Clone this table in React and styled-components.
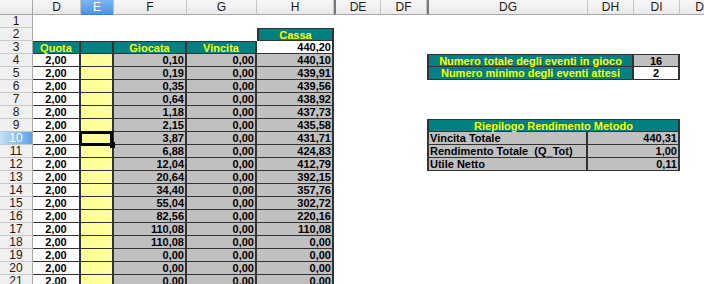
import React from 'react';
import styled, { createGlobalStyle, css } from 'styled-components';

const GlobalStyle = createGlobalStyle`
  html, body {
    margin: 0;
    padding: 0;
    background: #fff;
    overflow: hidden;
  }
  body {
    font-family: "Liberation Sans", Arial, sans-serif;
  }
`;

const TEAL = '#008080';
const LINE = '#333';

const COLUMNS = [
  { name: 'D', width: 48 },
  { name: 'E', width: 33, active: true },
  { name: 'F', width: 73 },
  { name: 'G', width: 70 },
  { name: 'H', width: 77 },
  { name: 'DE', width: 47, gap: true },
  { name: 'DF', width: 46 },
  { name: 'DG', width: 161, gap: true },
  { name: 'DH', width: 46 },
  { name: 'DI', width: 46 },
  { name: 'DJ', width: 46 },
];

const GIOCATA = ['0,10', '0,19', '0,35', '0,64', '1,18', '2,15', '3,87', '6,88', '12,04', '20,64', '34,40', '55,04', '82,56', '110,08', '110,08', '0,00', '0,00', '0,00'];
const CASSA = ['440,10', '439,91', '439,56', '438,92', '437,73', '435,58', '431,71', '424,83', '412,79', '392,15', '357,76', '302,72', '220,16', '110,08', '0,00', '0,00', '0,00', '0,00'];

const SUMMARY = {
  10: ['Vincita Totale', '440,31'],
  11: ['Rendimento Totale  (Q_Tot)', '1,00'],
  12: ['Utile Netto', '0,11'],
};

const Sheet = styled.div`
  display: grid;
  grid-template-columns: 33px ${COLUMNS.map((c) => `${c.width}px`).join(' ')};
  grid-template-rows: 15px repeat(21, 13px);
  width: max-content;
`;

const Corner = styled.div`
  box-sizing: border-box;
  background: linear-gradient(#f7f7f7, #e9e9e9);
  border-right: 1px solid #a8a8a8;
  border-bottom: 1px solid #a8a8a8;
`;

const ColHead = styled.div`
  box-sizing: border-box;
  display: flex;
  align-items: center;
  justify-content: center;
  font-size: 12px;
  color: #1a1a1a;
  background: linear-gradient(#f7f7f7, #e9e9e9);
  border-right: 1px solid #c4c4c4;
  border-bottom: 1px solid #a8a8a8;
  overflow: hidden;
  ${(p) => p.$gap && css`border-left: 2px solid #7a7a7a;`}
  ${(p) => p.$active && css`
    color: #fff;
    background: linear-gradient(#7ab6f2, #4b95e6);
    border-bottom-color: #3a7fd0;
  `}
`;

const RowHead = styled.div`
  box-sizing: border-box;
  display: flex;
  align-items: center;
  justify-content: center;
  font-size: 12px;
  line-height: 12px;
  color: #2a1414;
  background: #f0f0f0;
  border-right: 1px solid #a8a8a8;
  border-bottom: 1px solid #c8c8c8;
  overflow: hidden;
  ${(p) => p.$active && css`
    color: #fff;
    background: linear-gradient(to right, #c4e0fb, #5ba3ee);
  `}
`;

const FILLS = {
  blank: '#fff',
  head: TEAL,
  white: '#fff',
  yellow: '#ffff99',
  grey: '#c0c0c0',
};

const Cell = styled.div`
  position: relative;
  box-sizing: border-box;
  display: flex;
  align-items: center;
  justify-content: ${(p) => ({ left: 'flex-start', center: 'center', right: 'flex-end' }[p.$align || 'center'])};
  padding: 0 1px;
  font-size: 11px;
  line-height: 12px;
  font-weight: bold;
  white-space: pre;
  color: ${(p) => (p.$kind === 'head' ? '#ffff00' : '#000')};
  background: ${(p) => FILLS[p.$kind || 'blank']};
  grid-column: span ${(p) => p.$span || 1};
  ${(p) => p.$kind && p.$kind !== 'blank' && css`
    border-right: 2px solid ${LINE};
    border-bottom: 1px solid ${LINE};
  `}
  ${(p) => p.$top && css`border-top: 1px solid ${LINE};`}
  ${(p) => p.$left && css`border-left: 2px solid ${LINE};`}
`;

const Selection = styled.div`
  position: absolute;
  top: -1px;
  left: -2px;
  right: -1px;
  bottom: -2px;
  border: 3px solid #000;
  z-index: 2;
  pointer-events: none;

  &::after {
    content: '';
    position: absolute;
    right: -5px;
    bottom: -5px;
    width: 5px;
    height: 6px;
    background: #000;
  }
`;

const blanks = (n) => Array.from({ length: n }, () => ({}));

// left-hand betting table, columns D..H
function tableCells(row) {
  if (row === 1) return blanks(5);
  if (row === 2) return [...blanks(4), { kind: 'head', text: 'Cassa', top: true, left: true }];
  if (row === 3) {
    return [
      { kind: 'head', text: 'Quota', top: true },
      { kind: 'head', top: true },
      { kind: 'head', text: 'Giocata', top: true },
      { kind: 'head', text: 'Vincita', top: true },
      { kind: 'white', text: '440,20', align: 'right' },
    ];
  }
  const i = row - 4;
  return [
    { kind: 'white', text: '2,00' },
    { kind: 'yellow', selected: row === 10 },
    { kind: 'grey', text: GIOCATA[i], align: 'right' },
    { kind: 'grey', text: '0,00', align: 'right' },
    { kind: 'grey', text: CASSA[i], align: 'right' },
  ];
}

// side panels, columns DG..DI
function panelCells(row) {
  if (row === 4) {
    return [
      { kind: 'head', span: 2, text: 'Numero totale degli eventi in gioco', top: true, left: true },
      { kind: 'grey', text: '16', top: true },
    ];
  }
  if (row === 5) {
    return [
      { kind: 'head', span: 2, text: 'Numero minimo degli eventi attesi', left: true },
      { kind: 'white', text: '2' },
    ];
  }
  if (row === 9) {
    return [{ kind: 'head', span: 3, text: 'Riepilogo Rendimento Metodo', top: true, left: true }];
  }
  if (SUMMARY[row]) {
    const [label, value] = SUMMARY[row];
    return [
      { kind: 'grey', text: label, align: 'left', left: true },
      { kind: 'grey', span: 2, text: value, align: 'right' },
    ];
  }
  return blanks(3);
}

function rowCells(row) {
  return [...tableCells(row), ...blanks(2), ...panelCells(row), {}];
}

export default function App() {
  const rows = Array.from({ length: 21 }, (_, i) => i + 1);

  return (
    <>
      <GlobalStyle />
      <Sheet>
        <Corner />
        {COLUMNS.map((c) => (
          <ColHead key={c.name} $gap={c.gap} $active={c.active}>
            {c.name}
          </ColHead>
        ))}
        {rows.map((row) => (
          <React.Fragment key={row}>
            <RowHead $active={row === 10}>{row}</RowHead>
            {rowCells(row).map((c, j) => (
              <Cell
                key={j}
                $kind={c.kind}
                $align={c.align}
                $span={c.span}
                $top={c.top}
                $left={c.left}
              >
                {c.text}
                {c.selected && <Selection />}
              </Cell>
            ))}
          </React.Fragment>
        ))}
      </Sheet>
    </>
  );
}
